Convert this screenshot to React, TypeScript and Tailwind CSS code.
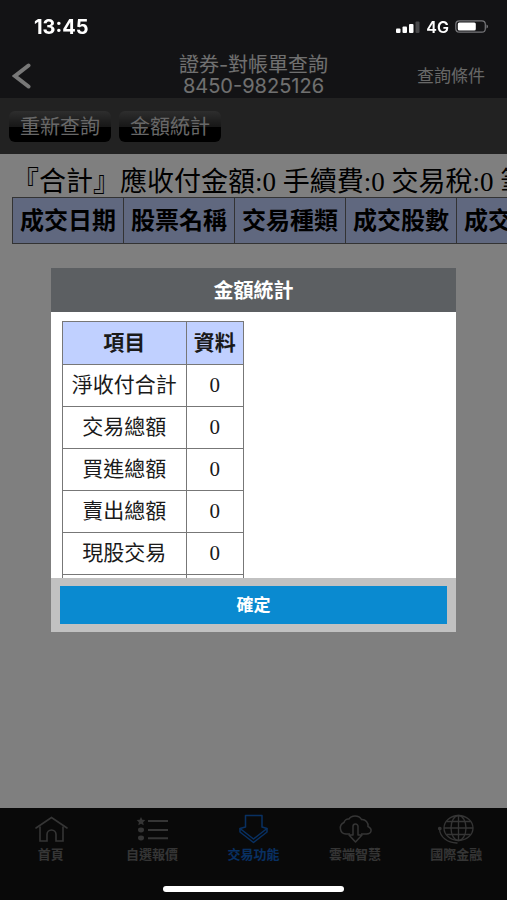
import { useState } from "react";
import type { ReactNode } from "react";

interface StatRow {
  name: string;
  value: number;
}

interface NavItem {
  label: string;
  icon: ReactNode;
  active?: boolean;
}

const columns = ["成交日期", "股票名稱", "交易種類", "成交股數", "成交價格"];

const stats: StatRow[] = [
  { name: "淨收付合計", value: 0 },
  { name: "交易總額", value: 0 },
  { name: "買進總額", value: 0 },
  { name: "賣出總額", value: 0 },
  { name: "現股交易", value: 0 },
];

const HomeIcon = () => (
  <svg viewBox="0 0 36 30" className="h-[30px] w-9" fill="none" stroke="currentColor" strokeWidth="1.6">
    <path d="M3 14 18.500 3.500 34 14" strokeLinecap="round" />
    <path d="M7 12.500V27h7v-6.500a4.500 4.500 0 0 1 9 0V27h7V12.500" />
  </svg>
);

const ListIcon = () => (
  <svg viewBox="0 0 36 30" className="h-[30px] w-9" fill="currentColor">
    <path d="m7 3 1.300 2.700 3 .4-2.200 2.100.6 3L7 9.700l-2.700 1.500.6-3-2.200-2.100 3-.4z" />
    <ellipse cx="7" cy="16" rx="3" ry="2.400" />
    <ellipse cx="7" cy="24" rx="3" ry="2.400" />
    <path d="M14 6h20v2H14zM14 15h20v2H14zM14 23.300h20v2H14z" />
  </svg>
);

const TradeIcon = () => (
  <svg viewBox="0 0 36 30" className="h-[30px] w-9" fill="none" stroke="currentColor" strokeWidth="1.500">
    <path d="M10.500 1.500H27V13l5 1.500L18.500 25 5 14.500l5.500-1.500z" strokeLinejoin="round" />
    <path d="M5 14.500v3.500l13.500 10.500L32 18v-3.500" strokeLinejoin="round" />
  </svg>
);

const CloudIcon = () => (
  <svg viewBox="0 0 36 30" className="h-[30px] w-9" fill="none" stroke="currentColor" strokeWidth="1.500">
    <path d="M13 20H9a6 6 0 0 1-2-11.500 4.500 4.500 0 0 1 5-3.500c2-4 10-4.500 12.500.5a6 6 0 0 1 6.500 7C36 15 34.500 20 29.500 20H24" />
    <path d="M16 21v-8.500a2.500 2.500 0 0 1 5 0V21h4l-6.500 7L12 21z" strokeLinejoin="round" />
  </svg>
);

const GlobeIcon = () => (
  <svg viewBox="0 0 36 30" className="h-[30px] w-9" fill="none" stroke="currentColor" strokeWidth="1.300">
    <ellipse cx="20.500" cy="14" rx="14.500" ry="12.500" />
    <ellipse cx="20.500" cy="14" rx="7.500" ry="12.500" />
    <path d="M20.500 1.500v25M6 14h29M8.500 7.500h24M8.500 20.500h24" />
    <path d="M1.500 15c.5 8 8 14.300 18 14" />
    <circle cx="1.800" cy="14.500" r="1.200" fill="currentColor" />
  </svg>
);

const navItems: NavItem[] = [
  { label: "首頁", icon: <HomeIcon /> },
  { label: "自選報價", icon: <ListIcon /> },
  { label: "交易功能", icon: <TradeIcon />, active: true },
  { label: "雲端智慧", icon: <CloudIcon /> },
  { label: "國際金融", icon: <GlobeIcon /> },
];

const StatusBar = () => (
  <div className="relative z-20 flex h-[53px] items-center justify-between pr-[18px] pl-[34px] text-white">
    <span className="text-xl font-bold">13:45</span>
    <div className="flex items-center gap-1.5">
      <svg viewBox="0 0 24 12" className="h-3 w-6" fill="#fff">
        <rect x="0" y="7.500" width="4.500" height="4.500" rx="1" />
        <rect x="6.500" y="5.500" width="4.500" height="6.500" rx="1" />
        <rect x="13" y="3" width="4.500" height="9" rx="1" />
        <rect x="19.500" y="0.500" width="4" height="11.500" rx="1" fill="#48484a" />
      </svg>
      <span className="text-base font-semibold">4G</span>
      <svg viewBox="0 0 34 13" className="h-[13px] w-[34px]">
        <rect x="0.800" y="0.800" width="29.500" height="11.400" rx="3.500" fill="none" stroke="#77777a" strokeWidth="1.200" />
        <rect x="2.800" y="2.500" width="18" height="8" rx="1.500" fill="#fff" />
        <path d="M31.500 4.500c2 .8 2 3.200 0 4z" fill="#77777a" />
      </svg>
    </div>
  </div>
);

const StatsDialog = ({ onClose }: { onClose: () => void }) => (
  <div className="fixed inset-0 z-10 flex items-center justify-center bg-black/50">
    <div role="dialog" aria-labelledby="stats-title" className="w-4/5 bg-[#c1c1c1]">
      <h2 id="stats-title" className="bg-[#5c5f62] pt-0.5 text-center text-xl leading-[42px] font-bold text-white">
        金額統計
      </h2>
      <div className="h-[266px] overflow-hidden bg-white px-[11px] pt-[9px]">
        <table className="border-collapse text-center font-['Liberation_Serif','Noto_Sans_CJK_TC',serif] text-[21px] leading-[41px] text-[#1a1a1a]">
          <thead>
            <tr className="bg-[#c0d0ff] leading-[42px]">
              <th className="w-[124px] border border-[#777] p-0">項目</th>
              <th className="w-[57px] border border-[#777] p-0">資料</th>
            </tr>
          </thead>
          <tbody>
            {stats.map((row) => (
              <tr key={row.name}>
                <td className="border border-[#777] p-0">{row.name}</td>
                <td className="border border-[#777] p-0">{row.value}</td>
              </tr>
            ))}
            {/* next row, only its top edge shows */}
            <tr>
              <td className="h-[42px] border border-[#777] p-0" />
              <td className="border border-[#777] p-0" />
            </tr>
          </tbody>
        </table>
      </div>
      <div className="px-[9px] py-2">
        <button onClick={onClose} className="block h-[38px] w-full bg-[#0a8ad0] pt-0.5 text-[17px] font-bold text-white">
          確定
        </button>
      </div>
    </div>
  </div>
);

const ToolButton = ({ children, onClick }: { children: ReactNode; onClick?: () => void }) => (
  <button
    onClick={onClick}
    className="h-[31px] rounded-md bg-linear-to-b from-[#5c5c5c] from-0% via-[#303030] via-50% to-black to-50% px-[11px] pt-px text-xl leading-[30px] text-[#d0d0d0]"
  >
    {children}
  </button>
);

const App = () => {
  const [showStats, setShowStats] = useState(true);

  return (
    <div className="flex min-h-screen flex-col overflow-hidden bg-white font-[Inter,'Noto_Sans_CJK_TC',sans-serif]">
      <header className="bg-[#27272a]">
        <StatusBar />
        <div className="grid h-[45px] grid-cols-[1fr_auto_1fr] items-center text-[#f0f0f0]">
          <button aria-label="返回" className="w-fit pl-3">
            <svg viewBox="0 0 20 26" className="h-[26px] w-5" fill="none" stroke="currentColor" strokeWidth="4">
              <path d="M16.500 2.500 3 13l13.500 10.500" strokeLinecap="round" />
            </svg>
          </button>
          <h1 className="text-center text-xl leading-[21px] text-[#e0e0e0]">
            <span className="block">證券-對帳單查詢</span>
            <span className="block">8450-9825126</span>
          </h1>
          <button className="justify-self-end pt-0.5 pr-[22px] text-[17px] text-[#d0d0d0]">查詢條件</button>
        </div>
      </header>

      <div className="flex h-14 items-center gap-2 bg-[#444] px-[9px]">
        <ToolButton>重新查詢</ToolButton>
        <ToolButton onClick={() => setShowStats(true)}>金額統計</ToolButton>
      </div>

      <main className="flex-1 overflow-hidden pt-3.5 pl-3 font-['Liberation_Serif','Noto_Sans_CJK_TC',serif]">
        <p className="text-[27px] leading-[29px] whitespace-nowrap">
          『合計』應收付金額:0 手續費:0 交易稅:0 筆數:0
        </p>
        <table className="border-collapse text-2xl leading-[43px] whitespace-nowrap">
          <thead>
            <tr className="bg-[#c0d0ff]">
              {columns.map((col) => (
                <th key={col} className="border border-[#666] px-[7px] pt-0.5 pb-0">
                  {col}
                </th>
              ))}
            </tr>
          </thead>
        </table>
      </main>

      <nav className="grid h-[92px] grid-cols-5 bg-[#131313] pt-1.5">
        {navItems.map((item) => (
          <a
            key={item.label}
            href="#"
            className={`flex flex-col items-center text-[13px] leading-5 font-bold ${
              item.active ? "text-[#1060c4]" : "text-[#6a6a6a]"
            }`}
          >
            {item.icon}
            {item.label}
          </a>
        ))}
      </nav>

      {/* home indicator */}
      <div className="fixed inset-x-0 bottom-2 z-20 mx-auto h-1.5 w-[181px] rounded-full bg-white" />

      {showStats && <StatsDialog onClose={() => setShowStats(false)} />}
    </div>
  );
};

export default App;
